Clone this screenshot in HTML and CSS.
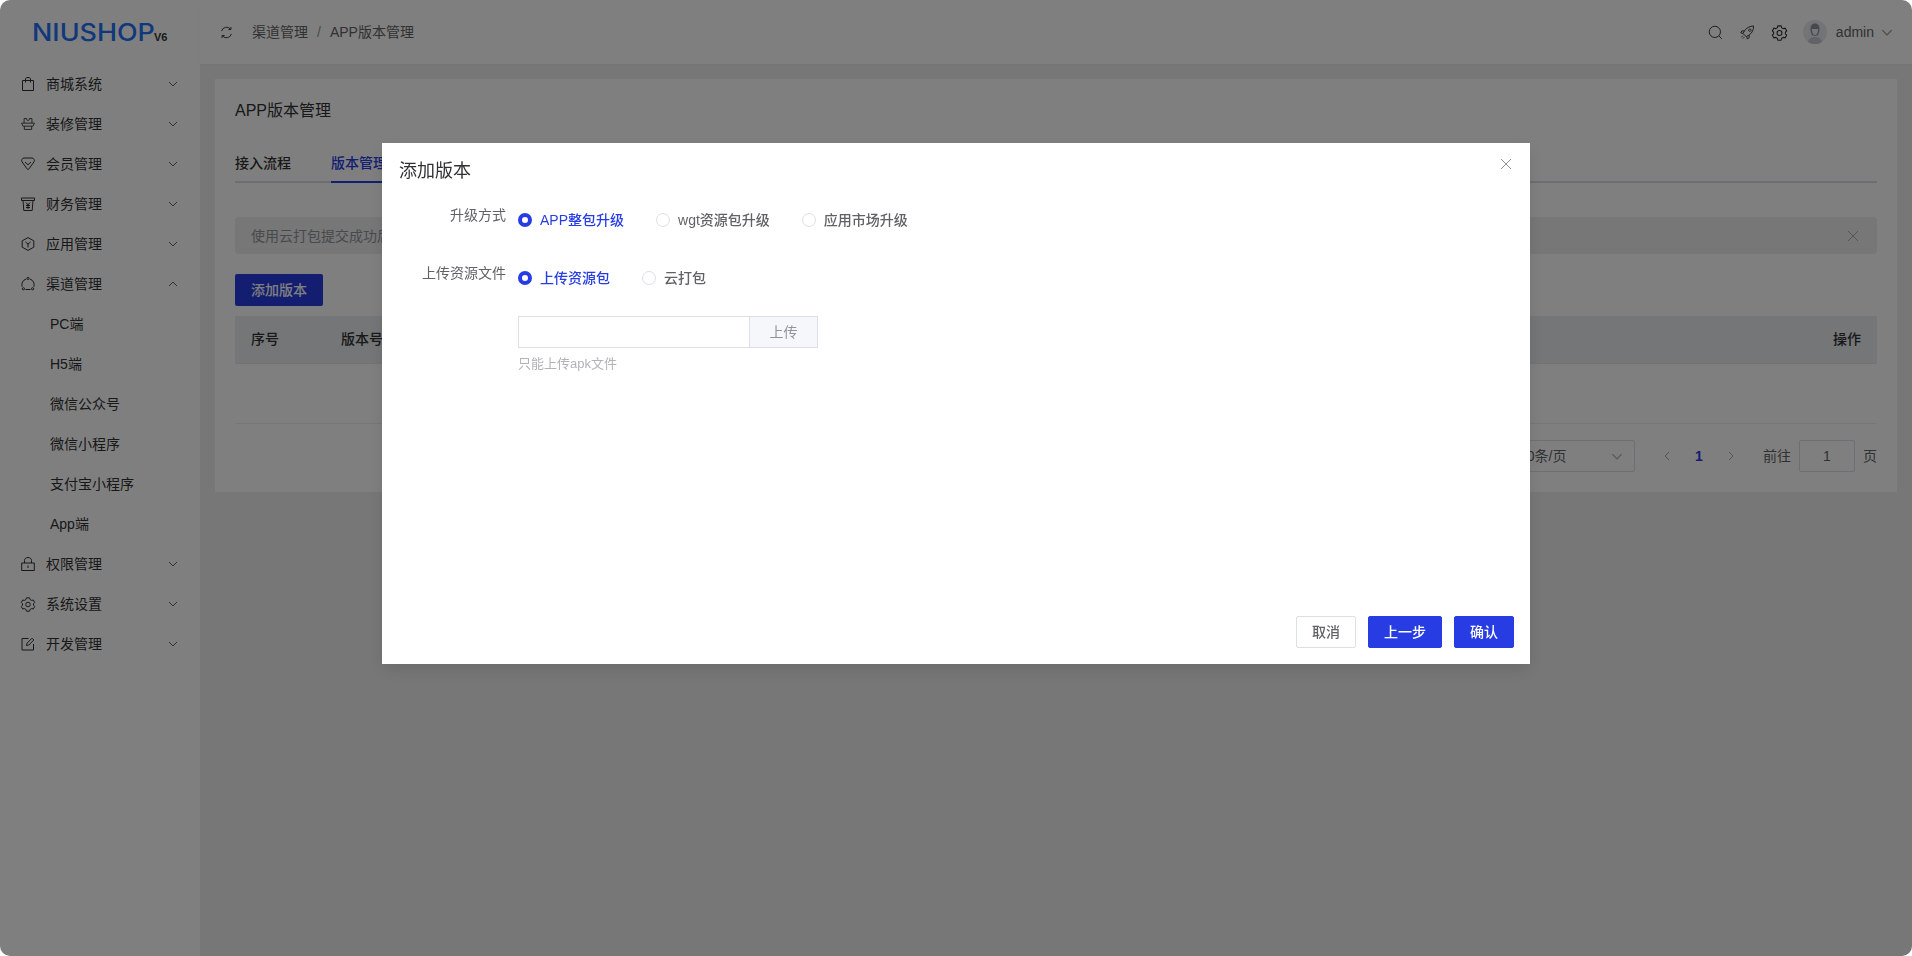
FILE: index.html
```html
<!DOCTYPE html>
<html lang="zh-CN">
<head>
<meta charset="utf-8">
<title>APP版本管理</title>
<link rel="stylesheet" href="styles.css">
</head>
<body>
<div class="app">
  <aside class="sidebar">
    <div class="logo"><span class="logo-text">NIUSHOP</span><span class="logo-ver">V6</span></div>
    <nav class="menu">
      <div class="menu-item"><svg class="mi" viewBox="0 0 14 14"><path d="M1.500 3.500h11v10h-11zM4.500 5.500V2C4.500 1 5.500.5 7 .5s2.500.5 2.500 1.500v3.500"/></svg><span>商城系统</span><svg class="chev" viewBox="0 0 10 6"><path d="M1 1l4 4 4-4"/></svg></div>
      <div class="menu-item"><svg class="mi" viewBox="0 0 16 14"><path d="M3.500 6V.8h3v1.200c0 1.200 3 1.200 3 0V.8h3V6M.6 6h14.800l-1.700 3.500H2.300zM3.800 9.500v3.700h8.400V9.500"/></svg><span>装修管理</span><svg class="chev" viewBox="0 0 10 6"><path d="M1 1l4 4 4-4"/></svg></div>
      <div class="menu-item"><svg class="mi" viewBox="0 0 14 14"><path d="M3 1h8c1.800 0 3 2.200 2 3.800L8 11.800c-.5.700-1.500.700-2 0L1 4.800C0 3.200 1.200 1 3 1zM4 5l3 2.800L10 5"/></svg><span>会员管理</span><svg class="chev" viewBox="0 0 10 6"><path d="M1 1l4 4 4-4"/></svg></div>
      <div class="menu-item"><svg class="mi" viewBox="0 0 14 14"><path d="M.5 1h13v2.500H.5zM2 3.500l.8 10h8.400l.8-10M5 5.500l2 2.500 2-2.500M7 8v4M5 8.500h4M5 10.500h4"/></svg><span>财务管理</span><svg class="chev" viewBox="0 0 10 6"><path d="M1 1l4 4 4-4"/></svg></div>
      <div class="menu-item"><svg class="mi" viewBox="0 0 14 14"><path d="M7 .6l5.800 3.200v6.400L7 13.400 1.200 10.200V3.800zM4.500 5L7 7l2.500-2M7 7v3.500"/></svg><span>应用管理</span><svg class="chev" viewBox="0 0 10 6"><path d="M1 1l4 4 4-4"/></svg></div>
      <div class="menu-item"><svg class="mi" viewBox="0 0 14 14"><path d="M5.200 2A6 6 0 0 0 1.200 9.800M8.800 2A6 6 0 0 1 12.800 9.800M4.500 12.500h5"/><circle cx="7" cy="1.400" r="1.100"/><circle cx="2.400" cy="11.800" r="1.100"/><circle cx="11.600" cy="11.800" r="1.100"/></svg><span>渠道管理</span><svg class="chev" viewBox="0 0 10 6"><path d="M1 5l4-4 4 4"/></svg></div>
      <div class="sub-item">PC端</div>
      <div class="sub-item">H5端</div>
      <div class="sub-item">微信公众号</div>
      <div class="sub-item">微信小程序</div>
      <div class="sub-item">支付宝小程序</div>
      <div class="sub-item">App端</div>
      <div class="menu-item"><svg class="mi" viewBox="0 0 14 14"><path d="M.7 6h12.600v7.500H.7zM3.500 6V3.500C3.500 1.600 5 .5 7 .5s3.500 1.100 3.500 3V6M7 8.500v2.500"/></svg><span>权限管理</span><svg class="chev" viewBox="0 0 10 6"><path d="M1 1l4 4 4-4"/></svg></div>
      <div class="menu-item"><svg class="mi" viewBox="0 0 14 14"><path d="M5.500.8h3l.5 1.700 1.600.9 1.700-.4 1.400 2.500-1.200 1.300v1.400l1.200 1.300-1.400 2.500-1.700-.4-1.600.9-.5 1.700h-3l-.5-1.700-1.600-.9-1.700.4L.3 9.500l1.200-1.300V6.800L.3 5.500l1.400-2.500 1.700.4L5 2.500z"/><circle cx="7" cy="7.500" r="2.300"/></svg><span>系统设置</span><svg class="chev" viewBox="0 0 10 6"><path d="M1 1l4 4 4-4"/></svg></div>
      <div class="menu-item"><svg class="mi" viewBox="0 0 14 14"><path d="M7.500 1.500H1v11.500h11.500V7M5.500 8.500l.5-2.300L11 1.200l1.800 1.800-5 5z"/></svg><span>开发管理</span><svg class="chev" viewBox="0 0 10 6"><path d="M1 1l4 4 4-4"/></svg></div>
    </nav>
  </aside>
  <div class="main">
    <header class="topbar">
      <svg class="refresh" viewBox="0 0 14 14"><path d="M1.700 5.500A5.500 5.500 0 0 1 11.200 3.200M12.300 8.500A5.500 5.500 0 0 1 2.800 10.800M11.800 1v2.800H9M2.200 13v-2.800H5"/></svg>
      <div class="crumbs"><span>渠道管理</span><i>/</i><span>APP版本管理</span></div>
      <div class="top-right">
        <svg class="ti" viewBox="0 0 16 16"><circle cx="7.300" cy="7.300" r="6"/><path d="M11.800 11.800l2.900 2.900"/></svg>
        <svg class="ti" viewBox="0 0 16 16"><path d="M5 11l-1.800-2 1.700-3C7 2.800 10.500 1.300 14.500 1c0 4-1.500 7.500-4.700 9.600l-3 1.700zM4.800 6.300H2L.8 8.300l2.400.7M9.800 10.800v2.800l-2 1.200-.7-2.500M10.500 4.200a1.300 1.300 0 1 0 .01 0M3 11.500l-1.500 1.500M4.500 13l-1.500 1.500"/></svg>
        <svg class="ti" viewBox="0 0 14 14"><path d="M5.500.8h3l.5 1.700 1.600.9 1.700-.4 1.400 2.500-1.200 1.300v1.400l1.200 1.300-1.400 2.500-1.700-.4-1.600.9-.5 1.700h-3l-.5-1.700-1.600-.9-1.700.4L.3 9.500l1.200-1.300V6.800L.3 5.500l1.400-2.500 1.700.4L5 2.500z"/><circle cx="7" cy="7.500" r="2.300"/></svg>
        <svg class="avatar" viewBox="0 0 24 24"><circle class="av-bg" cx="12" cy="12" r="12"/><path class="av-body" d="M5 22c1-4 4-5 7-5s6 1 7 5a12 12 0 0 1-14 0z"/><path class="av-hair" d="M7.500 9c0-4 2-5.500 4.500-5.500S16.500 5 16.500 9c0 3-1 5-1.500 6-1 1-5 1-6 0-.5-1-1.500-3-1.500-6z"/><path class="av-face" d="M9 9h6c.2 3-1 6-3 6s-3.200-3-3-6z"/></svg>
        <span class="admin">admin</span>
        <svg class="chev top-chev" viewBox="0 0 10 6"><path d="M1 1l4 4 4-4"/></svg>
      </div>
    </header>
    <section class="content">
      <div class="card">
        <div class="card-title">APP版本管理</div>
        <div class="tabs"><div class="tab">接入流程</div><div class="tab active">版本管理</div></div>
        <div class="alert"><span>使用云打包提交成功后，可在此查看打包进度</span><svg class="x" viewBox="0 0 12 12"><path d="M1 1l10 10M11 1L1 11"/></svg></div>
        <button class="add-btn">添加版本</button>
        <div class="thead"><span class="c1">序号</span><span class="c2">版本号</span><span class="c3">操作</span></div>
        <div class="tbody"></div>
        <div class="pager">
          <div class="page-size"><span>10条/页</span><svg class="chev" viewBox="0 0 10 6"><path d="M1 1l4 4 4-4"/></svg></div>
          <svg class="pg-arrow" viewBox="0 0 6 10"><path d="M5 1L1 5l4 4"/></svg>
          <b class="pg-num">1</b>
          <svg class="pg-arrow" viewBox="0 0 6 10"><path d="M1 1l4 4-4 4"/></svg>
          <span class="goto">前往</span><span class="goto-input">1</span><span class="goto-end">页</span>
        </div>
      </div>
    </section>
  </div>
</div>
<div class="overlay"></div>
<div class="dialog">
  <div class="d-head">添加版本<svg class="d-close" viewBox="0 0 12 12"><path d="M1 1l10 10M11 1L1 11"/></svg></div>
  <div class="d-body">
    <div class="f-row r1">
      <label class="f-label">升级方式</label>
      <div class="radios">
        <span class="radio on"><i></i>APP整包升级</span>
        <span class="radio"><i></i>wgt资源包升级</span>
        <span class="radio"><i></i>应用市场升级</span>
      </div>
    </div>
    <div class="f-row r2">
      <label class="f-label">上传资源文件</label>
      <div class="radios">
        <span class="radio on"><i></i>上传资源包</span>
        <span class="radio"><i></i>云打包</span>
      </div>
    </div>
    <div class="f-row r3">
      <label class="f-label"></label>
      <div>
        <div class="upload"><div class="up-input"></div><div class="up-btn">上传</div></div>
        <div class="hint">只能上传apk文件</div>
      </div>
    </div>
  </div>
  <div class="d-foot">
    <button class="btn">取消</button>
    <button class="btn primary">上一步</button>
    <button class="btn primary">确认</button>
  </div>
</div>
</body>
</html>
```

FILE: styles.css
```css
* { box-sizing: border-box; }
html, body { height: 100%; }
body {
  margin: 0;
  overflow: hidden;
  background: #fff;
  color: #303133;
  font: 14px/20px "Liberation Sans", "Noto Sans CJK SC", sans-serif;
}
svg { fill: none; stroke: currentColor; stroke-width: 1; flex: none; }

.app { display: flex; height: 956px; border-radius: 10px; overflow: hidden; }

.sidebar { width: 200px; flex: none; background: #fff; color: #303133; }
.logo { height: 64px; padding: 19px 0 0 32px; display: flex; align-items: flex-start; }
.logo-text { font: 500 24px/28px "Inter", sans-serif; color: #2270f5; transform: scaleX(1.12); transform-origin: 0 50%; width: 122px; }
.logo-ver { font: 700 11px/13px "Liberation Sans", sans-serif; color: #333; margin-top: 12px; }
.menu-item { height: 40px; display: flex; align-items: center; padding-left: 21px; }
.menu-item span { margin-left: 11px; flex: 1; }
.mi { width: 14px; height: 14px; overflow: visible; }
.chev { width: 10px; height: 6px; color: #606266; }
.menu-item .chev { margin-right: 22px; }
.sub-item { height: 40px; line-height: 40px; padding-left: 50px; }

.main { flex: 1; min-width: 0; display: flex; flex-direction: column; background: #eeeeee; }
.topbar { height: 64px; flex: none; background: #fff; display: flex; align-items: center; padding: 0 19px 0 20px; box-shadow: 0 1px 2px rgba(0,0,0,.04); }
.refresh { width: 13px; height: 13px; }
.crumbs { margin-left: 19px; color: #606266; display: flex; }
.crumbs i { font-style: normal; margin: 0 9px; color: #909399; }
.top-right { margin-left: auto; display: flex; align-items: center; }
.ti { width: 15px; height: 15px; margin-right: 17px; overflow: visible; }
.avatar { width: 24px; height: 24px; stroke: none; margin-left: -1px; }
.av-bg { fill: #e6e8ee; }
.av-body { fill: #c2c6d2; }
.av-hair { fill: #8e93a3; }
.av-face { fill: #eceef2; }
.admin { margin-left: 9px; color: #606266; }
.top-chev { width: 12px; height: 7px; margin-left: 7px; color: #909399; }

.content { padding: 15px; }
.card { background: #fff; padding: 20px; height: 413px; }
.card-title { font-size: 16px; line-height: 24px; margin-bottom: 20px; }
.tabs { display: flex; height: 40px; border-bottom: 2px solid #dcdde2; }
.tab { height: 40px; line-height: 40px; font-weight: 500; margin-right: 40px; }
.tab.active { color: #273de3; border-bottom: 2px solid #273de3; }
.alert { margin-top: 34px; height: 37px; background: #eeeeef; border-radius: 4px; padding: 0 16px; display: flex; align-items: center; justify-content: space-between; color: #909399; }
.alert .x { width: 12px; height: 12px; margin-right: 2px; color: #a8abb2; }
.add-btn { display: block; margin-top: 20px; width: 88px; height: 32px; border: 0; border-radius: 2px; background: #273de3; color: #fff; font: 500 14px/32px "Liberation Sans", "Noto Sans CJK SC", sans-serif; padding: 0; }
.thead { margin-top: 10px; height: 48px; background: #eaecef; border-bottom: 1px solid #e4e6ea; display: flex; align-items: center; padding: 0 16px 2px; font-weight: 500; }
.c1 { width: 90px; }
.c3 { margin-left: auto; }
.tbody { height: 60px; border-bottom: 1px solid #ebeef5; }
.pager { margin-top: 16px; display: flex; justify-content: flex-end; align-items: center; height: 32px; color: #606266; }
.page-size { width: 128px; height: 32px; border: 1px solid #dcdfe6; border-radius: 2px; display: flex; align-items: center; justify-content: space-between; padding: 0 11px; margin-right: 29px; }
.page-size .chev { width: 12px; height: 7px; color: #a8abb2; }
.pg-arrow { width: 6px; height: 10px; color: #a8abb2; }
.pg-num { width: 28px; margin: 0 15px; text-align: center; color: #273de3; font-family: "Liberation Sans", sans-serif; font-size: 14px; }
.goto { margin-left: 29px; }
.goto-input { width: 56px; height: 32px; margin-left: 8px; border: 1px solid #dcdfe6; border-radius: 2px; text-align: center; line-height: 30px; }
.goto-end { margin-left: 8px; }

.overlay { position: fixed; inset: 0; background: rgba(0, 0, 0, .5); border-radius: 10px; }

.dialog { position: fixed; left: 382px; top: 143px; width: 1148px; height: 521px; background: #fff; display: flex; flex-direction: column; padding: 16px; box-shadow: 0 6px 16px rgba(0,0,0,.1); }
.d-head { position: relative; font-size: 18px; line-height: 24px; color: #303133; padding-left: 1px; }
.d-close { position: absolute; right: 2px; top: -1px; width: 12px; height: 12px; color: #909399; }
.d-body { flex: 1; padding-top: 21px; }
.f-row { display: flex; }
.f-label { width: 109px; margin-right: 12px; margin-left: -1px; text-align: right; color: #606266; line-height: 22px; }
.r1, .r2 { height: 32px; margin-bottom: 26px; }
.r3 { margin-top: -4px; }
.radios { display: flex; height: 32px; align-items: center; }
.radio { display: flex; align-items: center; margin-right: 32px; font-weight: 500; color: #606266; }
.radio i { width: 14px; height: 14px; border-radius: 50%; border: 1px solid #dcdfe6; margin-right: 8px; background: #fff; }
.radio.on { color: #273de3; }
.radio.on i { border: 4.5px solid #273de3; }
.upload { display: flex; width: 300px; height: 32px; border: 1px solid #dcdfe6; }
.up-input { flex: 1; }
.up-btn { width: 68px; background: #f5f7fa; border-left: 1px solid #dcdfe6; text-align: center; line-height: 30px; color: #909399; }
.hint { margin-top: 6px; font-size: 13px; line-height: 20px; color: #b1b3b8; }
.d-foot { display: flex; justify-content: flex-end; gap: 12px; }
.btn { min-width: 60px; height: 32px; padding: 0 15px; border: 1px solid #dcdfe6; border-radius: 2px; background: #fff; color: #606266; font: 500 14px/30px "Liberation Sans", "Noto Sans CJK SC", sans-serif; }
.btn.primary { background: #273de3; border-color: #273de3; color: #fff; }
```
